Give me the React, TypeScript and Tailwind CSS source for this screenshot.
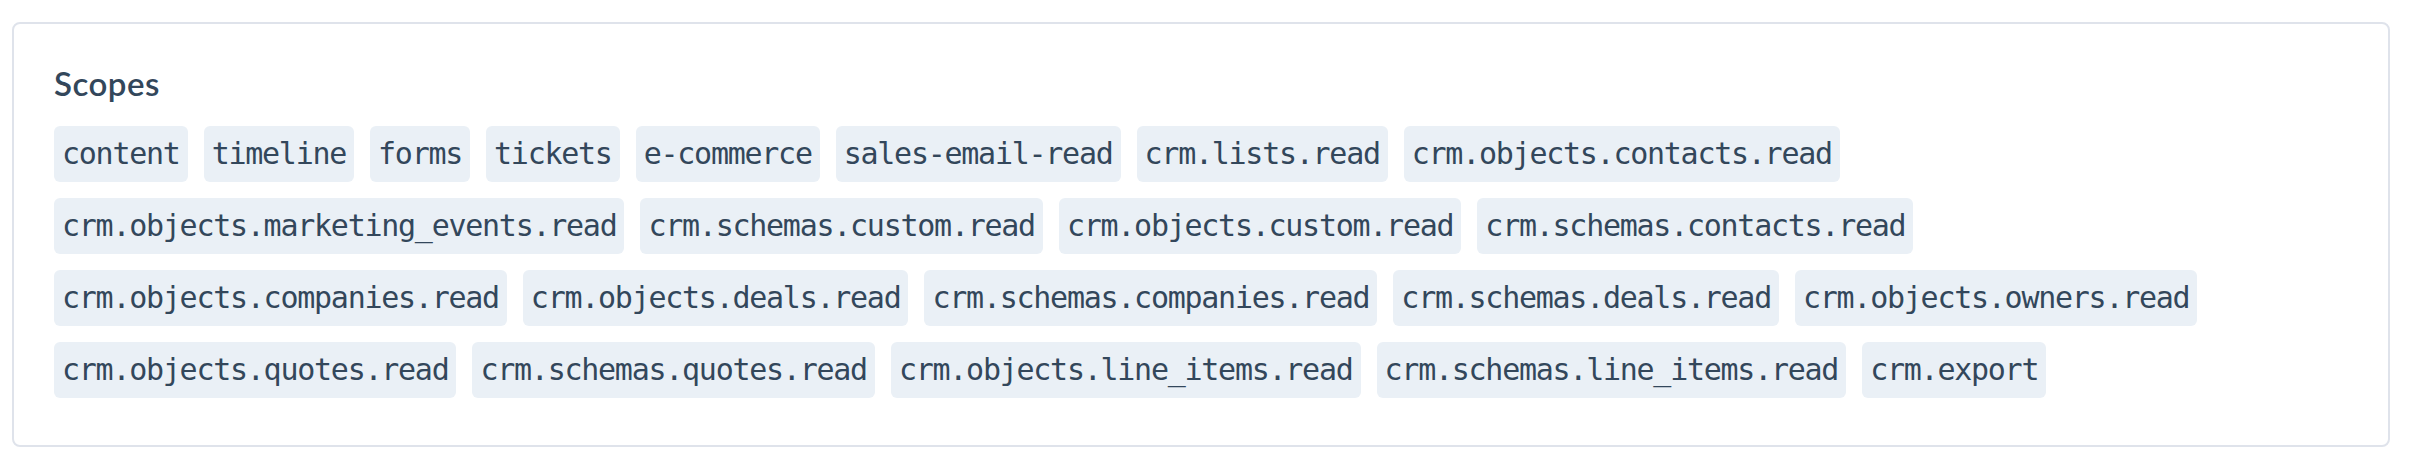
const scopes = [
  "content",
  "timeline",
  "forms",
  "tickets",
  "e-commerce",
  "sales-email-read",
  "crm.lists.read",
  "crm.objects.contacts.read",
  "crm.objects.marketing_events.read",
  "crm.schemas.custom.read",
  "crm.objects.custom.read",
  "crm.schemas.contacts.read",
  "crm.objects.companies.read",
  "crm.objects.deals.read",
  "crm.schemas.companies.read",
  "crm.schemas.deals.read",
  "crm.objects.owners.read",
  "crm.objects.quotes.read",
  "crm.schemas.quotes.read",
  "crm.objects.line_items.read",
  "crm.schemas.line_items.read",
  "crm.export",
];

function ScopeTag({ name }: { name: string }) {
  return (
    <span className="rounded-md bg-[#eaf0f6] px-2 py-2 font-['DejaVu_Sans_Mono',monospace] text-[30px] leading-[40px] tracking-[-1.26px] text-[#33475b]">
      {name}
    </span>
  );
}

export default function App() {
  return (
    <div className="min-h-[458px] bg-white pl-[12px] pt-[22px]">
      <div className="w-[2378px] rounded-lg border-2 border-[#dfe3eb] px-[40px] pb-[47px] pt-[39px]">
        <h3 className="mb-[23px] font-['Lato',sans-serif] text-[33px] font-semibold leading-[40px] tracking-[0.5px] text-[#33475b]">
          Scopes
        </h3>
        <div className="flex flex-wrap gap-4">
          {scopes.map((scope) => (
            <ScopeTag key={scope} name={scope} />
          ))}
        </div>
      </div>
    </div>
  );
}
